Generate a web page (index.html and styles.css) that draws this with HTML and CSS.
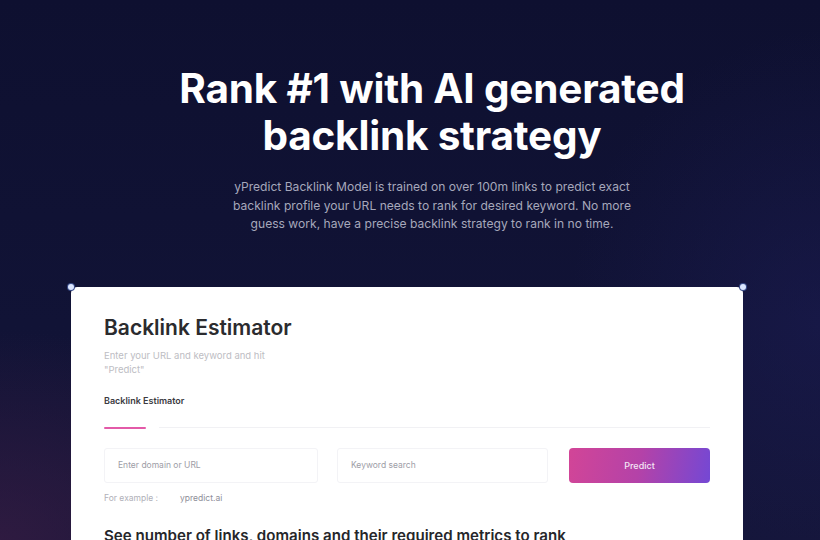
FILE: index.html
```html
<!DOCTYPE html>
<html>
<head>
<meta charset="utf-8">
<link rel="stylesheet" href="styles.css">
</head>
<body>
<div class="page">
  <section class="hero">
    <h1 class="title">Rank #1 with AI generated<br>backlink strategy</h1>
    <p class="lead">yPredict Backlink Model is trained on over 100m links to predict exact backlink profile your URL needs to rank for desired keyword. No more guess work, have a precise backlink strategy to rank in no time.</p>
  </section>
  <section class="card">
    <span class="dot dot-left"></span>
    <span class="dot dot-right"></span>
    <h2 class="card-title">Backlink Estimator</h2>
    <p class="card-sub">Enter your URL and keyword and hit "Predict"</p>
    <div class="tabs">
      <div class="tab-label">Backlink Estimator</div>
      <div class="tab-line"><span class="tab-active"></span><span class="tab-rest"></span></div>
    </div>
    <div class="form-row">
      <div class="field field-url">Enter domain or URL</div>
      <div class="field field-kw">Keyword search</div>
      <button class="predict">Predict</button>
    </div>
    <div class="example"><span>For example :</span><span class="example-val">ypredict.ai</span></div>
    <h3 class="section-title">See number of links, domains and their required metrics to rank</h3>
  </section>
</div>
</body>
</html>
```
FILE: styles.css
```css
html, body {
  margin: 0;
  padding: 0;
}
body {
  width: 820px;
  height: 540px;
  overflow: hidden;
  font-family: Inter, "Noto Sans", sans-serif;
}
.page {
  height: 540px;
  overflow: hidden;
  background:
    radial-gradient(ellipse 420px 300px at 0% 100%, rgba(64, 30, 70, 0.6), rgba(64, 30, 70, 0) 70%),
    radial-gradient(ellipse 360px 420px at 100% 60%, rgba(30, 30, 90, 0.45), rgba(30, 30, 90, 0) 70%),
    linear-gradient(180deg, #0e1030 0%, #111336 60%, #141538 100%);
  display: flex;
  flex-direction: column;
  align-items: center;
}
.hero {
  margin-left: 44px;
  padding-top: 65px;
  display: flex;
  flex-direction: column;
  align-items: center;
}
.title {
  margin: 0;
  color: #ffffff;
  font-size: 40.5px;
  line-height: 47px;
  font-weight: 700;
  text-align: center;
  letter-spacing: -0.2px;
}
.lead {
  margin: 19px 0 0;
  width: 402px;
  color: #a6a8bb;
  font-size: 12.1px;
  line-height: 18.5px;
  text-align: center;
}
.card {
  position: relative;
  margin-top: 53px;
  margin-right: 6px;
  width: 672px;
  box-sizing: border-box;
  padding: 28px 33px 0;
  background: #ffffff;
  border-radius: 6px 6px 0 0;
  flex: 1;
}
.dot {
  position: absolute;
  top: -3px;
  width: 6px;
  height: 6px;
  border-radius: 50%;
  background: #dbe6ff;
  box-shadow: 0 0 0 1px #3a4d8a;
}
.dot-left { left: -3px; }
.dot-right { right: -3px; }
.card-title {
  margin: 0;
  font-size: 21px;
  line-height: 25px;
  font-weight: 600;
  color: #2b2b2e;
}
.card-sub {
  margin: 9px 0 0;
  width: 180px;
  font-size: 9.5px;
  line-height: 14px;
  color: #bdbdc3;
}
.tabs {
  margin-top: 18px;
}
.tab-label {
  font-size: 9px;
  font-weight: 600;
  color: #3a3a40;
  line-height: 12px;
}
.tab-line {
  margin-top: 20px;
  display: flex;
  align-items: center;
  gap: 13px;
}
.tab-active {
  width: 42px;
  height: 2px;
  border-radius: 1px;
  background: #e35aa8;
}
.tab-rest {
  flex: 1;
  height: 1px;
  background: #f1f1f4;
}
.form-row {
  margin-top: 19px;
  display: flex;
  height: 35px;
}
.field {
  box-sizing: border-box;
  border: 1px solid #f3f3f6;
  border-radius: 3px;
  padding-left: 13px;
  display: flex;
  align-items: center;
  font-size: 8.5px;
  color: #9d9da6;
}
.field-url {
  width: 214px;
  margin-right: 19px;
}
.field-kw {
  width: 211px;
  margin-right: 21px;
}
.predict {
  flex: 1;
  border: 0;
  border-radius: 4px;
  background: linear-gradient(100deg, #d24597 0%, #b442a8 50%, #7448d4 100%);
  color: #f3e6f6;
  font-family: Inter, "Noto Sans", sans-serif;
  font-size: 9px;
  font-weight: 500;
}
.example {
  margin-top: 9px;
  display: flex;
  gap: 22px;
  font-size: 8.5px;
  color: #b0b0b8;
  line-height: 12px;
}
.example-val {
  color: #8e8e98;
}
.section-title {
  margin: 22px 0 0;
  font-size: 15.1px;
  font-weight: 600;
  color: #26262a;
  line-height: 20px;
}
```
